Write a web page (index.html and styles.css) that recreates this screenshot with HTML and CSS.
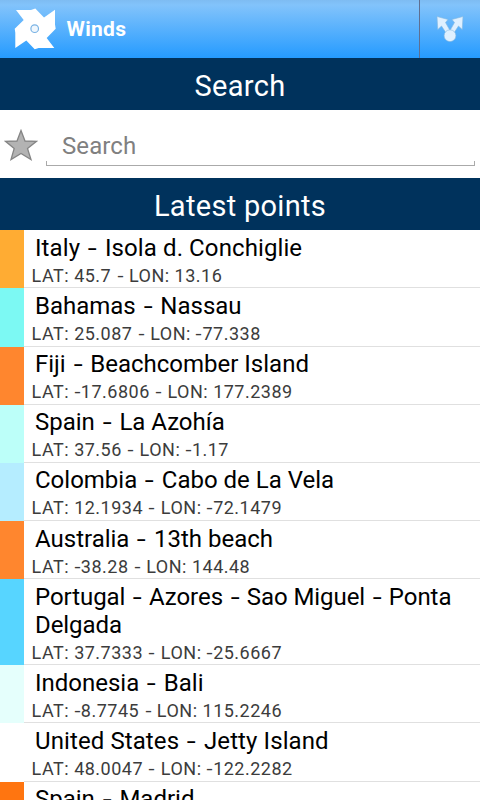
FILE: index.html
```html
<!DOCTYPE html>
<html lang="en">
<head>
<meta charset="utf-8">
<title>Winds</title>
<link rel="stylesheet" href="styles.css">
</head>
<body>
<header class="bar">
  <svg class="logo" viewBox="0 0 42 42" width="42" height="42"><path fill="#fff" d="M2 2H17L21.300 .5L30 9.500L41 1.700V16.500L41.700 20.700L32.700 30L40.300 39.900H24.700L20.700 41.300L12.300 32.500L1.300 40V24.700L.7 20.700L9.700 12Z"/><circle cx="20.700" cy="20.700" r="3.800" fill="#f0f7fd" stroke="#79b2e4" stroke-width="1.200"/></svg>
  <h1 class="brand">Winds</h1>
  <button class="share" aria-label="Share"><svg viewBox="0 0 28 28" width="28" height="28"><g fill="#dff0ff" stroke="#86b8df" stroke-width=".6"><path d="M1 1.500L12 4.500L9.500 7.500L14 15.500L10 17.800L5.500 11L1.800 14.500Z"/><path d="M27 1.500L16 4.500L18.500 7.500L14 15.500L18 17.800L22.500 11L26.200 14.500Z"/><circle cx="14" cy="20.700" r="5.900"/></g></svg></button>
</header>
<h2 class="heading">Search</h2>
<div class="search">
  <svg class="star" viewBox="0 0 34 32" width="34" height="32"><path d="M17 1.500L21 12L32.500 12.300L23.500 19.500L27 30.500L17 24.500L7 30.500L10.200 19.500L1.500 12.300L13 12Z" fill="#b3b3b3" stroke="#858585" stroke-width="1.300"/></svg>
  <div class="field"><span class="hint">Search</span></div>
</div>
<h2 class="heading">Latest points</h2>
<ul class="points">
  <li class="point amber"><div class="name loose">Italy <span class="dash">-</span> Isola d. Conchiglie</div><div class="coords">LAT: 45.7 <span class="dash">-</span> LON: 13.16</div></li>
  <li class="point aqua"><div class="name">Bahamas <span class="dash">-</span> Nassau</div><div class="coords">LAT: 25.087 <span class="dash">-</span> LON: <span class="minus">-</span>77.338</div></li>
  <li class="point orange"><div class="name">Fiji <span class="dash">-</span> Beachcomber Island</div><div class="coords">LAT: <span class="minus">-</span>17.6806 <span class="dash">-</span> LON: 177.2389</div></li>
  <li class="point mint"><div class="name">Spain <span class="dash">-</span> La Azohía</div><div class="coords">LAT: 37.56 <span class="dash">-</span> LON: <span class="minus">-</span>1.17</div></li>
  <li class="point pale"><div class="name">Colombia <span class="dash">-</span> Cabo de La Vela</div><div class="coords">LAT: 12.1934 <span class="dash">-</span> LON: <span class="minus">-</span>72.1479</div></li>
  <li class="point orange"><div class="name">Australia <span class="dash">-</span> 13th beach</div><div class="coords">LAT: <span class="minus">-</span>38.28 <span class="dash">-</span> LON: 144.48</div></li>
  <li class="point sky"><div class="name tight">Portugal <span class="dash">-</span> Azores <span class="dash">-</span> Sao Miguel <span class="dash">-</span> Ponta Delgada</div><div class="coords">LAT: 37.7333 <span class="dash">-</span> LON: <span class="minus">-</span>25.6667</div></li>
  <li class="point ice"><div class="name">Indonesia <span class="dash">-</span> Bali</div><div class="coords">LAT: <span class="minus">-</span>8.7745 <span class="dash">-</span> LON: 115.2246</div></li>
  <li class="point white"><div class="name loose">United States <span class="dash">-</span> Jetty Island</div><div class="coords">LAT: 48.0047 <span class="dash">-</span> LON: <span class="minus">-</span>122.2282</div></li>
  <li class="point deep"><div class="name">Spain <span class="dash">-</span> Madrid</div></li>
</ul>
</body>
</html>
```
FILE: styles.css
```css
* { box-sizing: border-box; }
body { margin: 0; height: 800px; overflow: hidden; background: #fff; font-family: Roboto, sans-serif; }
h1, h2, ul { margin: 0; padding: 0; }
.bar { display: flex; align-items: center; height: 58px; padding-left: 14px; background: linear-gradient(#7ebcf2 0, #82c3fb 5px, #259bff 100%); }
.logo { display: block; }
.brand { flex: 1; margin-left: 10.5px; color: #fff; font-size: 21px; line-height: 24px; font-weight: 700; letter-spacing: .3px; }
.share { display: flex; align-items: center; justify-content: center; width: 61px; height: 58px; padding: 0; border: 0; border-left: 1px solid #5f6f91; background: none; }
.heading { height: 52px; background: #00325c; color: #fff; font-size: 29px; font-weight: 400; line-height: 56px; letter-spacing: .3px; text-align: center; }
.search { display: flex; height: 68px; padding: 19px 5px 0 4px; }
.star { flex: none; }
.field { flex: 1; height: 36px; margin: 1px 0 0 8px; padding-left: 16px; border-bottom: 1px solid #aaa; background: linear-gradient(#aaa, #aaa) left bottom / 1px 4px no-repeat, linear-gradient(#aaa, #aaa) right bottom / 1px 4px no-repeat; }
.hint { display: block; color: #808080; font-size: 24px; line-height: 32px; letter-spacing: .1px; }
.points { list-style: none; padding-top: .3px; }
.point { min-height: 58.15px; padding: 3.6px 8px 0 7.6px; border-left: 24px solid; box-shadow: inset 0 -1px #e0e0e0; }
.name { padding-left: 3.4px; color: #000; font-size: 24px; line-height: 28px; }
.loose { letter-spacing: .1px; }
.tight { letter-spacing: -.06px; }
.coords { height: 26.55px; color: #3c3c3c; font-size: 18px; line-height: 28px; letter-spacing: .5px; }
.dash { display: inline-block; margin: 0 3px; transform: scaleX(1.35); }
.tight .dash { margin: 0 2.7px; }
.coords .dash { margin: 0 1.4px; letter-spacing: 0; transform: scaleX(1.2); }
.minus { display: inline-block; margin: 0 .6px; transform: scaleX(1.2); }
.amber { border-color: #ffac33; }
.aqua { border-color: #7cf9f3; }
.orange { border-color: #ff862e; }
.mint { border-color: #bcfff9; }
.pale { border-color: #b5edff; }
.sky { border-color: #57d5ff; }
.ice { border-color: #e5fffc; }
.white { border-color: #fff; }
.deep { border-color: #ff7510; }
```
